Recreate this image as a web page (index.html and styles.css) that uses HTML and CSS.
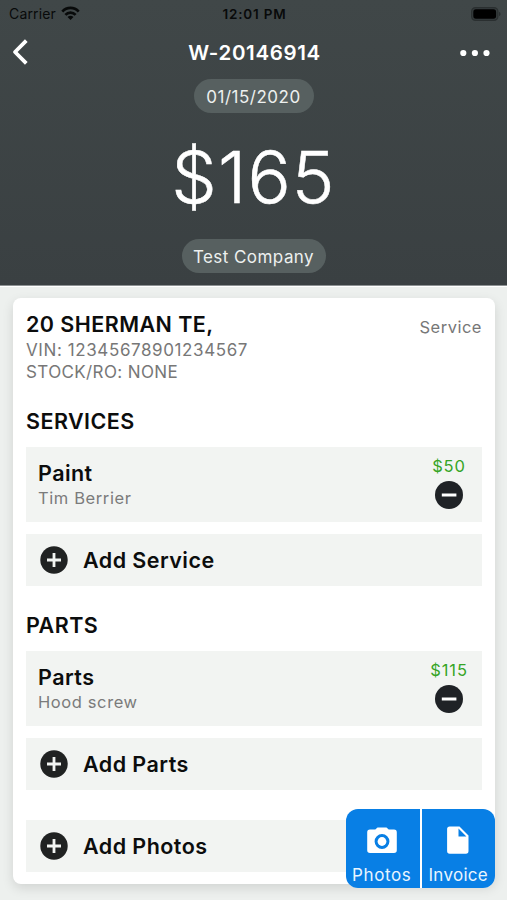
FILE: index.html
```html
<!DOCTYPE html>
<html lang="en">
<head>
<meta charset="utf-8">
<title>W-20146914</title>
<link rel="stylesheet" href="styles.css">
</head>
<body>
<svg class="defs" width="0" height="0" aria-hidden="true">
  <symbol id="plus" viewBox="0 0 28 28"><circle cx="14" cy="14" r="13.7" fill="#202222"/><path d="M14 7v14M7 14h14" stroke="#f2f4f2" stroke-width="2.8"/></symbol>
  <symbol id="minus" viewBox="0 0 28 28"><circle cx="14" cy="14" r="14" fill="#1f2226"/><path d="M6.8 14h14.6" stroke="#fff" stroke-width="3"/></symbol>
</svg>
<div class="screen">
  <header class="header">
    <div class="status">
      <div class="carrier"><span class="carrier-name">Carrier</span>
        <svg width="19" height="14" viewBox="0 0 19 14"><g fill="none" stroke="#080a0a" stroke-width="2.7"><path d="M1.3 5.6C5.8 .6 13.2 .6 17.7 5.6"/><path d="M4.4 8.8C7.2 5.8 11.8 5.8 14.6 8.8"/></g><path d="M6.5 10.9Q9.5 8.4 12.5 10.9L9.5 14Z" fill="#080a0a"/></svg>
      </div>
      <div class="clock">12:01 PM</div>
      <svg class="battery" width="30" height="14" viewBox="0 0 30 14"><rect x=".6" y=".6" width="26.3" height="12.8" rx="4" fill="#353b3c" stroke="#2a2f30" stroke-width="1.2"/><rect x="2.3" y="2.3" width="22.8" height="9.4" rx="2.6" fill="#000"/><path d="M28 4.8Q29.6 5.5 29.6 7T28 9.2Z" fill="#2a2f30"/></svg>
    </div>
    <div class="nav">
      <svg class="back" width="20" height="28" viewBox="0 0 20 28"><path d="M16.3 2.6L5 14L16.3 25.4" fill="none" stroke="#fff" stroke-width="3.8" stroke-linejoin="round"/></svg>
      <h1 class="title">W-20146914</h1>
      <svg class="more" width="32" height="8" viewBox="0 0 32 8" fill="#fff"><circle cx="4.3" cy="4" r="3.1"/><circle cx="15.9" cy="4" r="3.1"/><circle cx="27.5" cy="4" r="3.1"/></svg>
    </div>
    <div class="pill date"><span class="date-text">01/15/2020</span></div>
    <div class="amount"><span class="amount-text">$165</span></div>
    <div class="pill company"><span class="company-text">Test Company</span></div>
  </header>
  <main class="card">
    <section class="vehicle">
      <div>
        <h2 class="name">20 SHERMAN TE,</h2>
        <p class="meta vin">VIN: 12345678901234567</p>
        <p class="meta stock">STOCK/RO: NONE</p>
      </div>
      <span class="kind">Service</span>
    </section>
    <h3 class="heading">SERVICES</h3>
    <div class="item">
      <div><div class="item-name">Paint</div><div class="item-sub">Tim Berrier</div></div>
      <div class="item-side"><span class="price">$50</span><svg width="28" height="28"><use href="#minus"/></svg></div>
    </div>
    <div class="add"><svg width="28" height="28"><use href="#plus"/></svg><span class="add-text">Add Service</span></div>
    <h3 class="heading parts">PARTS</h3>
    <div class="item">
      <div><div class="item-name">Parts</div><div class="item-sub">Hood screw</div></div>
      <div class="item-side"><span class="price">$115</span><svg width="28" height="28"><use href="#minus"/></svg></div>
    </div>
    <div class="add"><svg width="28" height="28"><use href="#plus"/></svg><span class="add-text">Add Parts</span></div>
    <div class="add photos"><svg width="28" height="28"><use href="#plus"/></svg><span class="add-text">Add Photos</span></div>
  </main>
  <div class="actions">
    <div class="action">
      <svg width="32" height="32" viewBox="0 0 32 32"><path fill="#fff" fill-rule="evenodd" d="M11.5 3.6H20.500L22.700 5.600H28Q30.800 5.600 30.800 8.400V26.200Q30.800 28.900 28 28.900H4Q1.200 28.900 1.200 26.200V8.400Q1.200 5.600 4 5.600H9.300ZM16 10.100A7.400 7.400 0 1 0 16 24.900A7.400 7.400 0 1 0 16 10.100Z"/><circle cx="16" cy="17.500" r="4.400" fill="#fff"/></svg>
      <span class="action-text">Photos</span>
    </div>
    <div class="action">
      <svg width="32" height="32" viewBox="0 0 32 32"><path fill="#fff" fill-rule="evenodd" d="M7.700 2.500H17.500L26.500 11.500V27Q26.500 29.700 23.900 29.700H7.700Q5.100 29.700 5.100 27V5.100Q5.100 2.500 7.700 2.500ZM16.500 4.600V12.500H24.400Z"/></svg>
      <span class="action-text invoice">Invoice</span>
    </div>
  </div>
</div>
</body>
</html>
```
FILE: styles.css
```css
* { box-sizing: border-box; margin: 0; }
body { font-family: Inter, "Liberation Sans", sans-serif; color: #0c0d0d; background: #edf0ee; }
svg { display: block; flex: none; }
.defs { position: absolute; }
span, h1, h2, h3, p, .clock { white-space: nowrap; }
.screen { position: relative; width: 507px; height: 900px; overflow: hidden; }
.header { height: 286px; background: linear-gradient(#404748, #3a4042); border-bottom: 1px solid #8d9293; display: flex; flex-direction: column; align-items: center; color: #fff; box-shadow: 0 1px #fff; }
.status { align-self: stretch; height: 28px; display: grid; grid-template-columns: 1fr auto 1fr; align-items: center; padding: 0 6px 0 9px; color: #080a0a; }
.carrier { display: flex; align-items: center; gap: 5px; font-size: 14px; line-height: 18px; letter-spacing: .15px; }
.carrier svg { margin-top: -3px; }
.clock { font-size: 13.5px; font-weight: 600; letter-spacing: .8px; margin-left: -1px; }
.battery { justify-self: end; margin: -1px 0 0 0; }
.nav { align-self: stretch; height: 48px; display: grid; grid-template-columns: 1fr auto 1fr; align-items: center; padding: 0 10px; }
.more { justify-self: end; margin: 1px 6px 0 0; }
.title { font-size: 20.5px; line-height: 24px; font-weight: 600; letter-spacing: .65px; margin: 2px 0 0 2px; }
.pill { height: 34px; border-radius: 17px; background: #576060; color: #edf0ef; display: flex; align-items: center; justify-content: center; font-size: 17px; padding-top: 1px; }
.date { width: 120px; margin-top: 3px; letter-spacing: .5px; }
.amount { height: 126px; display: flex; align-items: center; font-size: 72px; font-weight: 300; letter-spacing: 1.1px; -webkit-text-stroke: .5px #fff; }
.company { width: 144px; letter-spacing: .45px; }
.card { margin: 12px 12px 0 13px; height: 586px; padding: 0 13px; border-radius: 8px; background: #fff; box-shadow: 0 4px 12px rgba(0,0,0,.12); }
.vehicle { display: flex; justify-content: space-between; height: 108px; padding-top: 14px; }
.name { font-size: 21.5px; line-height: 24px; font-weight: 600; letter-spacing: .45px; }
.meta { font-size: 17px; line-height: 22px; color: #777; }
.vin { letter-spacing: .6px; margin-top: 3px; }
.stock { letter-spacing: .38px; }
.kind { font-size: 16.5px; line-height: 31px; color: #777; letter-spacing: .5px; }
.heading { height: 41px; font-size: 21.5px; line-height: 30px; font-weight: 600; letter-spacing: .45px; }
.item { height: 75px; padding: 12px; background: #f2f4f2; display: flex; justify-content: space-between; }
.item-name { font-size: 21.5px; line-height: 29px; font-weight: 600; letter-spacing: .45px; }
.item-sub { font-size: 16.5px; line-height: 21px; color: #7b7b7b; letter-spacing: .6px; }
.item-side { width: 42px; display: flex; flex-direction: column; align-items: center; margin-top: -3px; }
.price { font-size: 16.5px; line-height: 21px; color: #36a526; letter-spacing: .9px; }
.item-side svg { margin-top: 4px; }
.add { height: 52px; margin-top: 12px; padding-left: 14px; background: #f2f4f2; display: flex; align-items: center; gap: 15px; font-size: 21.5px; font-weight: 600; letter-spacing: .45px; }
.parts { margin-top: 24px; }
.photos { margin-top: 30px; }
.actions { position: absolute; left: 346px; top: 809px; width: 149px; height: 79px; display: grid; grid-template-columns: 1fr 1fr; gap: 2px; background: #fff; border-radius: 12px; overflow: hidden; }
.action { background: #087fe5; display: flex; flex-direction: column; align-items: center; padding-top: 15px; color: #e9f5ff; }
.action:first-child { padding-right: 2px; }
.action-text { font-size: 17px; line-height: 20px; margin-top: 9px; letter-spacing: .6px; }
.invoice { letter-spacing: .3px; }
```
